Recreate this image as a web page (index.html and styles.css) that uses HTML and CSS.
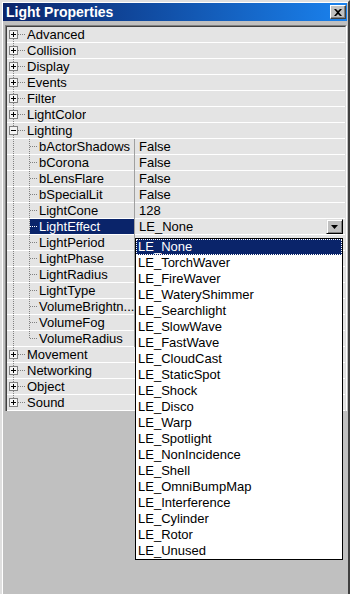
FILE: index.html
```html
<!DOCTYPE html>
<html lang="en">
<head>
<meta charset="UTF-8" />
<meta name="viewport" content="width=device-width, initial-scale=1" />
<title>Light Properties</title>
<link rel="stylesheet" href="styles.css">
</head>
<body>
<div class="window">
  <div class="titlebar">
    <span class="title">Light Properties</span>
    <span class="close">
      <svg width="8" height="7" viewBox="0 0 8 7"><path d="M0 0h2l2 2 2-2h2L5 3.5 8 7H6L4 5 2 7H0l3-3.5z" fill="#000"/></svg>
    </span>
  </div>

  <div class="props">
    <div class="rows">
      <div class="row"><span class="tree first"><i class="box plus"></i></span><span class="label">Advanced</span></div>
      <div class="row"><span class="tree"><i class="box plus"></i></span><span class="label">Collision</span></div>
      <div class="row"><span class="tree"><i class="box plus"></i></span><span class="label">Display</span></div>
      <div class="row"><span class="tree"><i class="box plus"></i></span><span class="label">Events</span></div>
      <div class="row"><span class="tree"><i class="box plus"></i></span><span class="label">Filter</span></div>
      <div class="row"><span class="tree"><i class="box plus"></i></span><span class="label">LightColor</span></div>
      <div class="row"><span class="tree"><i class="box"></i></span><span class="label">Lighting</span></div>

      <div class="row child"><div class="name"><span class="tree kid"></span><span class="label">bActorShadows</span></div><div class="value">False</div></div>
      <div class="row child"><div class="name"><span class="tree kid"></span><span class="label">bCorona</span></div><div class="value">False</div></div>
      <div class="row child"><div class="name"><span class="tree kid"></span><span class="label">bLensFlare</span></div><div class="value">False</div></div>
      <div class="row child"><div class="name"><span class="tree kid"></span><span class="label">bSpecialLit</span></div><div class="value">False</div></div>
      <div class="row child"><div class="name"><span class="tree kid"></span><span class="label">LightCone</span></div><div class="value">128</div></div>
      <div class="row child sel"><div class="name"><span class="tree kid"></span><span class="label">LightEffect</span></div>
        <div class="value">LE_None
          <span class="drop"><svg width="7" height="4" viewBox="0 0 7 4"><path d="M0 0h7L3.5 4z" fill="#000"/></svg></span>
        </div>
      </div>
      <!-- values of these rows are hidden under the open list -->
      <div class="row child"><div class="name"><span class="tree kid"></span><span class="label">LightPeriod</span></div><div class="value"></div></div>
      <div class="row child"><div class="name"><span class="tree kid"></span><span class="label">LightPhase</span></div><div class="value"></div></div>
      <div class="row child"><div class="name"><span class="tree kid"></span><span class="label">LightRadius</span></div><div class="value"></div></div>
      <div class="row child"><div class="name"><span class="tree kid"></span><span class="label">LightType</span></div><div class="value"></div></div>
      <div class="row child"><div class="name"><span class="tree kid"></span><span class="label">VolumeBrightn...</span></div><div class="value"></div></div>
      <div class="row child"><div class="name"><span class="tree kid"></span><span class="label">VolumeFog</span></div><div class="value"></div></div>
      <div class="row child"><div class="name"><span class="tree kid end"></span><span class="label">VolumeRadius</span></div><div class="value"></div></div>

      <div class="row"><span class="tree"><i class="box plus"></i></span><span class="label">Movement</span></div>
      <div class="row"><span class="tree"><i class="box plus"></i></span><span class="label">Networking</span></div>
      <div class="row"><span class="tree"><i class="box plus"></i></span><span class="label">Object</span></div>
      <div class="row"><span class="tree last"><i class="box plus"></i></span><span class="label">Sound</span></div>
    </div>
  </div>

  <ul class="dropdown">
    <li class="on">LE_None</li>
    <li>LE_TorchWaver</li>
    <li>LE_FireWaver</li>
    <li>LE_WateryShimmer</li>
    <li>LE_Searchlight</li>
    <li>LE_SlowWave</li>
    <li>LE_FastWave</li>
    <li>LE_CloudCast</li>
    <li>LE_StaticSpot</li>
    <li>LE_Shock</li>
    <li>LE_Disco</li>
    <li>LE_Warp</li>
    <li>LE_Spotlight</li>
    <li>LE_NonIncidence</li>
    <li>LE_Shell</li>
    <li>LE_OmniBumpMap</li>
    <li>LE_Interference</li>
    <li>LE_Cylinder</li>
    <li>LE_Rotor</li>
    <li>LE_Unused</li>
  </ul>
</div>
</body>
</html>
```

FILE: styles.css
```css
* {
  box-sizing: border-box;
}

:root {
  --dotv: repeating-linear-gradient(to bottom, #808080 0 1px, transparent 1px 2px);
  --doth: repeating-linear-gradient(to right, #808080 0 1px, transparent 1px 2px);
  --dothw: repeating-linear-gradient(to right, #fff 0 1px, transparent 1px 2px);
  --navy: #0a246a;
}

body {
  margin: 0;
  font-family: "Liberation Sans", Arial, sans-serif;
  font-size: 13px;
  color: #000;
  background: #c0c0c0;
}

/* Window frame */
.window {
  position: relative;
  width: 350px;
  height: 594px;
  padding: 1px;
  border: 2px solid;
  border-bottom: none;
  border-color: #dfdfdf #404040 #404040 #dfdfdf;
  box-shadow: inset 1px 1px #fff;
  background: #c0c0c0;
  overflow: hidden;
}

.titlebar {
  display: flex;
  align-items: center;
  height: 18px;
  padding: 0 1px 0 3px;
  background: linear-gradient(to right, #0a246a, #1a82ee);
  color: #fff;
  font-weight: bold;
  font-size: 14px;
}

.title {
  flex: 1;
  white-space: nowrap;
}

.close {
  display: flex;
  align-items: center;
  justify-content: center;
  width: 16px;
  height: 14px;
  background: #c0c0c0;
  border: 1px solid;
  border-color: #fff #404040 #404040 #fff;
  box-shadow: inset -1px -1px #808080;
}

/* Property grid */
.props {
  margin: 4px 0 0 2px;
  border: 1px solid;
  border-bottom: none;
  border-color: #808080 #fff #808080 #808080;
}

.rows {
  border: 1px solid;
  border-bottom: none;
  border-color: #404040 #dfdfdf #404040 #404040;
}

.row {
  display: flex;
  height: 16px;
  background: linear-gradient(#e4e4e4 15px, #fff 15px);
}

.label {
  height: 15px;
  line-height: 15px;
  white-space: nowrap;
  overflow: hidden;
}

.tree {
  flex: none;
  width: 20px;
  height: 16px;
  background:
    var(--dotv) 6px 0 / 1px 16px no-repeat,
    var(--doth) 11px 7px / 8px 1px no-repeat;
}

.tree.first {
  background:
    var(--dotv) 6px 8px / 1px 8px no-repeat,
    var(--doth) 11px 7px / 8px 1px no-repeat;
}

.tree.last {
  background:
    var(--dotv) 6px 0 / 1px 8px no-repeat,
    var(--doth) 11px 7px / 8px 1px no-repeat;
}

.tree.kid {
  width: 23px;
  background:
    var(--dotv) 6px 0 / 1px 16px no-repeat,
    var(--dotv) 22px 0 / 1px 16px no-repeat;
}

.tree.kid.end {
  background:
    var(--dotv) 6px 0 / 1px 16px no-repeat,
    var(--dotv) 22px 0 / 1px 8px no-repeat;
}

.box {
  display: block;
  width: 9px;
  height: 9px;
  margin: 3px 0 0 2px;
  border: 1px solid #808080;
  background:
    linear-gradient(#000, #000) center / 5px 1px no-repeat,
    #f4f4f4;
}

.box.plus {
  background:
    linear-gradient(#000, #000) center / 5px 1px no-repeat,
    linear-gradient(#000, #000) center / 1px 5px no-repeat,
    #f4f4f4;
}

.child .name {
  display: flex;
  flex: none;
  width: 128px;
  border-right: 1px solid #a0a0a0;
}

.child .label {
  flex: 1;
  padding-left: 9px;
  background: var(--doth) 0 7px / 8px 1px no-repeat;
}

.sel .label {
  background: var(--dothw) 0 7px / 8px 1px no-repeat, var(--navy);
  color: #fff;
}

.value {
  display: flex;
  align-items: flex-start;
  flex: 1;
  height: 15px;
  line-height: 15px;
  padding-left: 4px;
  white-space: nowrap;
}

.drop {
  display: flex;
  align-items: center;
  justify-content: center;
  width: 17px;
  height: 15px;
  margin: 0 2px 0 auto;
  background: #c0c0c0;
  border: 1px solid;
  border-color: #dfdfdf #000 #000 #dfdfdf;
  box-shadow: inset 1px 1px #fff, inset -1px -1px #808080;
}

/* Open combo list */
.dropdown {
  position: absolute;
  left: 133px;
  top: 236px;
  width: 208px;
  height: 322px;
  margin: 0;
  padding: 0;
  list-style: none;
  background: #fff;
  border: 1px solid #000;
}

.dropdown li {
  height: 16px;
  line-height: 16px;
  padding-left: 2px;
  white-space: nowrap;
}

.dropdown li.on {
  background: var(--navy);
  color: #fff;
  outline: 1px dotted #fff;
  outline-offset: -1px;
}
```
